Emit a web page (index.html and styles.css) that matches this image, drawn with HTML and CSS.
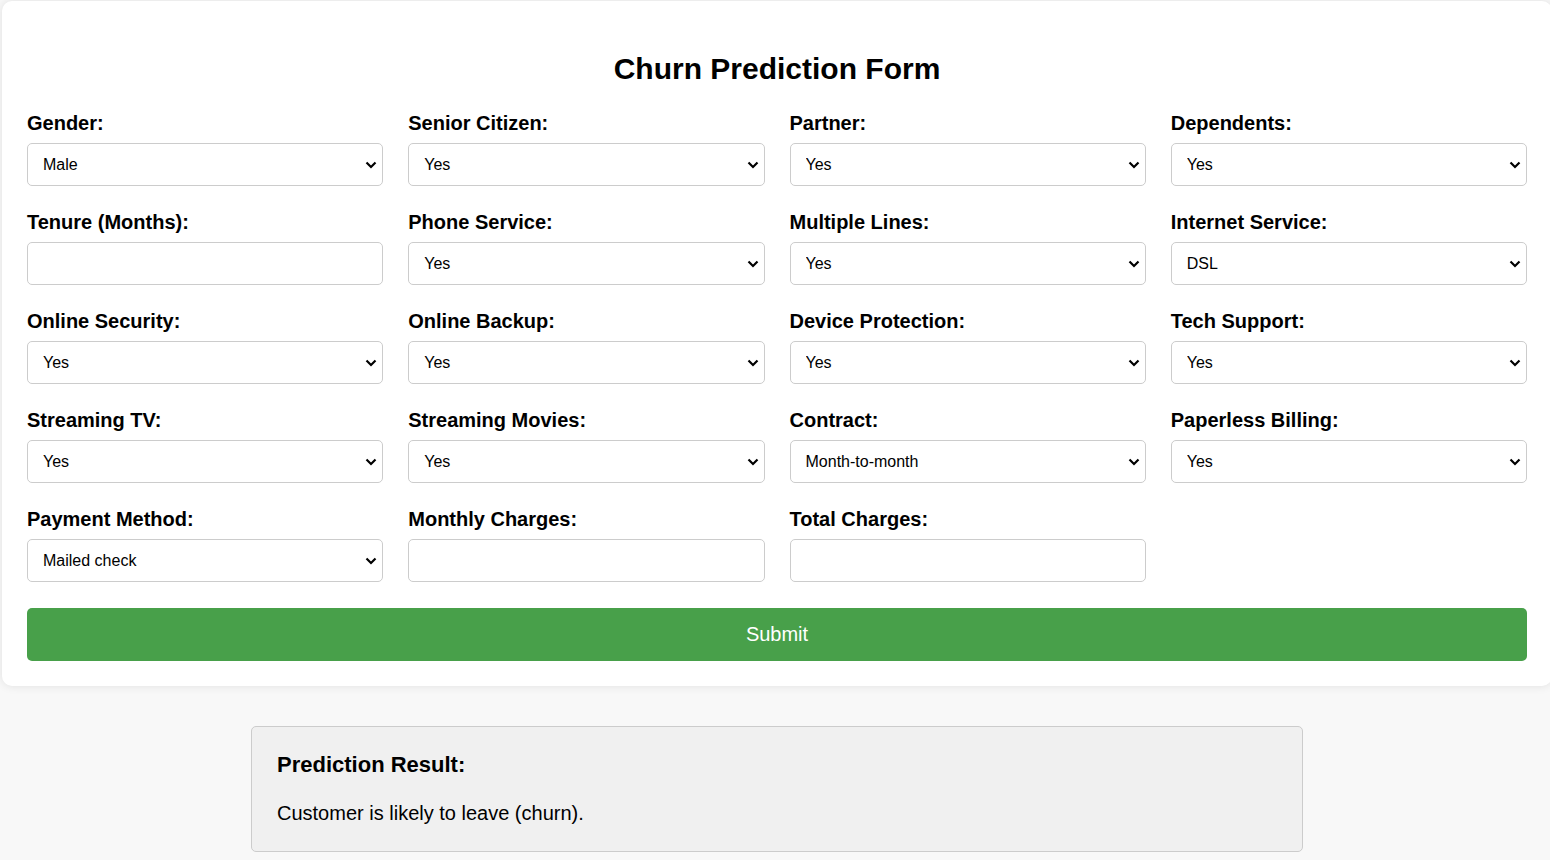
FILE: index.html
```html
<!DOCTYPE html>
<html lang="en">
<head>
<meta charset="utf-8">
<title>Churn Prediction Form</title>
<link rel="stylesheet" href="styles.css">
</head>
<body>
<div class="card">
  <h2 class="title">Churn Prediction Form</h2>
  <form class="form">
    <div class="grid">
      <div class="field"><label>Gender:</label><select><option>Male</option><option>Female</option></select></div>
      <div class="field"><label>Senior Citizen:</label><select><option>Yes</option><option>No</option></select></div>
      <div class="field"><label>Partner:</label><select><option>Yes</option><option>No</option></select></div>
      <div class="field"><label>Dependents:</label><select><option>Yes</option><option>No</option></select></div>

      <div class="field"><label>Tenure (Months):</label><input type="text"></div>
      <div class="field"><label>Phone Service:</label><select><option>Yes</option><option>No</option></select></div>
      <div class="field"><label>Multiple Lines:</label><select><option>Yes</option><option>No</option></select></div>
      <div class="field"><label>Internet Service:</label><select><option>DSL</option><option>Fiber optic</option><option>No</option></select></div>

      <div class="field"><label>Online Security:</label><select><option>Yes</option><option>No</option></select></div>
      <div class="field"><label>Online Backup:</label><select><option>Yes</option><option>No</option></select></div>
      <div class="field"><label>Device Protection:</label><select><option>Yes</option><option>No</option></select></div>
      <div class="field"><label>Tech Support:</label><select><option>Yes</option><option>No</option></select></div>

      <div class="field"><label>Streaming TV:</label><select><option>Yes</option><option>No</option></select></div>
      <div class="field"><label>Streaming Movies:</label><select><option>Yes</option><option>No</option></select></div>
      <div class="field"><label>Contract:</label><select><option>Month-to-month</option><option>One year</option><option>Two year</option></select></div>
      <div class="field"><label>Paperless Billing:</label><select><option>Yes</option><option>No</option></select></div>

      <div class="field"><label>Payment Method:</label><select><option>Mailed check</option><option>Electronic check</option></select></div>
      <div class="field"><label>Monthly Charges:</label><input type="text"></div>
      <div class="field"><label>Total Charges:</label><input type="text"></div>
    </div>
    <button type="button" class="submit">Submit</button>
  </form>
</div>

<div class="result">
  <h3 class="result-title">Prediction Result:</h3>
  <p class="result-text">Customer is likely to leave (churn).</p>
</div>
</body>
</html>
```

FILE: styles.css
```css
html, body {
  margin: 0;
  padding: 0;
  overflow-x: hidden;
}
body {
  background: #f8f8f8;
  font-family: "Liberation Sans", Arial, sans-serif;
  color: #000;
}
.card {
  width: 1500px;
  margin: 1px 0 0 2px;
  padding: 25px;
  background: #fff;
  border-radius: 10px;
  box-shadow: 0 0 10px rgba(0, 0, 0, 0.1);
}
.title {
  margin: 26px 0 26px;
  text-align: center;
  font-size: 30px;
  line-height: 34px;
  font-weight: bold;
}
.grid {
  display: grid;
  grid-template-columns: repeat(4, 1fr);
  column-gap: 25px;
  row-gap: 25px;
}
.field {
  display: flex;
  flex-direction: column;
}
.field label {
  font-size: 20px;
  line-height: 23px;
  font-weight: bold;
  margin-bottom: 8px;
}
.field select,
.field input {
  box-sizing: border-box;
  width: 100%;
  height: 43px;
  border: 1px solid #ccc;
  border-radius: 5px;
  background-color: #fff;
  font-family: "Liberation Sans", Arial, sans-serif;
  font-size: 16px;
  color: #000;
  padding: 0 10px 0 15px;
  margin: 0;
}
.field select {
  appearance: none;
  -webkit-appearance: none;
  background-image: url("data:image/svg+xml;utf8,<svg xmlns='http://www.w3.org/2000/svg' width='12' height='8' viewBox='0 0 12 8'><path d='M1.5 1.5 L6 6 L10.5 1.5' fill='none' stroke='%23000' stroke-width='2.2'/></svg>");
  background-repeat: no-repeat;
  background-position: right 5px center;
  background-size: 12px 8px;
}
.submit {
  display: block;
  width: 100%;
  height: 53px;
  margin-top: 26px;
  border: none;
  border-radius: 5px;
  background: #48a04a;
  color: #fff;
  font-family: "Liberation Sans", Arial, sans-serif;
  font-size: 20px;
  cursor: pointer;
}
.result {
  width: 1000px;
  margin: 40px 0 0 calc(50% - 524px);
  padding: 25px 25px 26px;
  background: #f0f0f0;
  border: 1px solid #ccc;
  border-radius: 5px;
}
.result-title {
  margin: 0 0 25px;
  font-size: 22px;
  line-height: 25px;
  font-weight: bold;
}
.result-text {
  margin: 0;
  font-size: 20px;
  line-height: 23px;
}
```
